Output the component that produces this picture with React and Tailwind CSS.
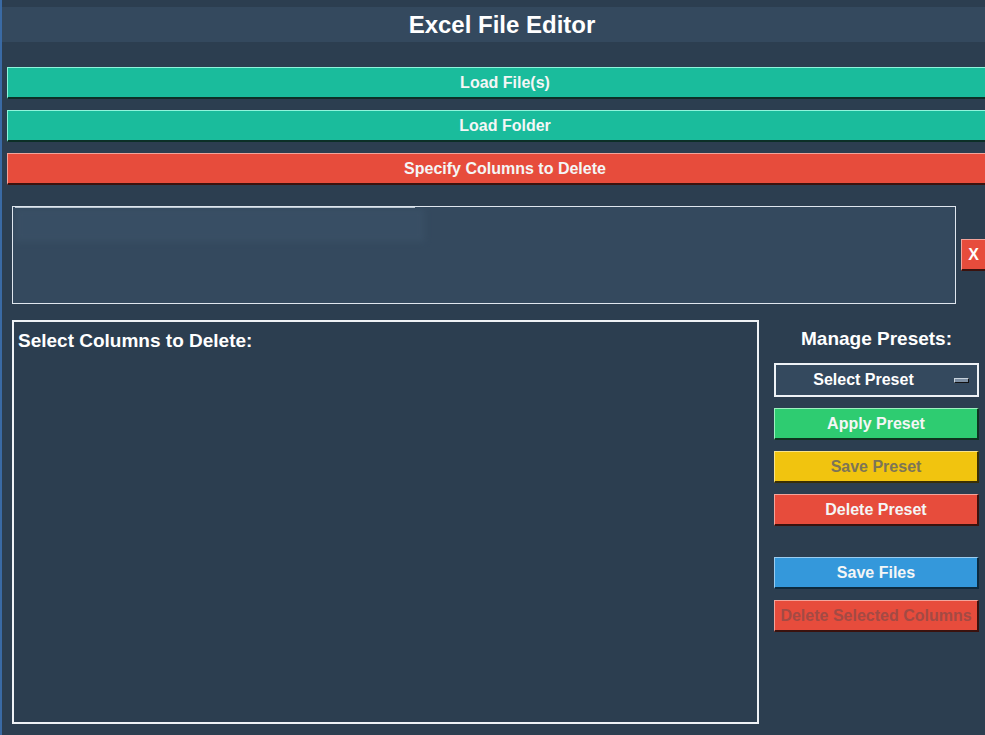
const FONT = { fontFamily: '"Liberation Sans", Arial, sans-serif' };

const WideButton = ({ label, color }) => (
  <button
    className={`w-full h-[32px] flex items-center justify-center text-[16px] font-bold text-[#f4f6f6] border-t border-l border-b-2 ${color}`}
  >
    {label}
  </button>
);

const SideButton = ({ label, color, text = "text-[#f4f6f6]" }) => (
  <button
    className={`w-full h-[32px] flex items-center justify-center text-[16px] font-bold border-t border-l border-b-2 border-r-2 ${color} ${text}`}
  >
    {label}
  </button>
);

export default function App() {
  return (
    <div
      style={FONT}
      className="w-full h-[735px] overflow-hidden bg-[#2c3e50] border-l-2 border-[#3a6aa4] flex flex-col"
    >
      {/* header + actions span a frame wider than the viewport */}
      <div className="w-[1000px] shrink-0">
        <div className="mt-[7px] h-[35px] bg-[#34495e] flex items-center justify-center">
          <h1 className="text-[24px] font-bold text-white">Excel File Editor</h1>
        </div>

        <div className="mt-[25px] pl-[5px] flex flex-col gap-[11px]">
          <WideButton label="Load File(s)" color="bg-[#1abc9c] border-t-[#8ff5dc] border-l-[#8ff5dc] border-b-[#0c2f27]" />
          <WideButton label="Load Folder" color="bg-[#1abc9c] border-t-[#8ff5dc] border-l-[#8ff5dc] border-b-[#0c2f27]" />
          <WideButton label="Specify Columns to Delete" color="bg-[#e74c3c] border-t-[#f3a49b] border-l-[#f3a49b] border-b-[#3a120e]" />
        </div>
      </div>

      {/* file list */}
      <div className="mt-[21px] pl-[10px] flex items-center gap-[5px]">
        <div className="flex-1 h-[98px] bg-[#34495e] border border-[#dfe6ee] relative overflow-hidden">
          <div className="absolute left-[2px] top-[1px] w-[410px] h-[34px] bg-[#3a5066] blur-[3px] opacity-80" />
          <div className="absolute left-[2px] top-0 w-[400px] h-[1px] bg-[#b8c4cf]" />
        </div>
        <button className="w-[24px] h-[32px] bg-[#e74c3c] text-white text-[16px] font-bold border-t border-l border-b-2 border-t-[#f3a49b] border-l-[#f3a49b] border-b-[#3a120e]">
          X
        </button>
      </div>

      {/* lower area */}
      <div className="mt-[16px] pl-[10px] pr-[6px] flex gap-[15px]">
        <div className="w-[747px] h-[404px] border-2 border-[#eef2f6] bg-[#2c3e50] px-[4px] pt-[8px]">
          <p className="text-[19px] leading-[22px] font-bold text-white">Select Columns to Delete:</p>
        </div>

        <div className="flex-1 flex flex-col">
          <p className="mt-[8px] text-center text-[19px] leading-[22px] font-bold text-white">Manage Presets:</p>
          <button className="mt-[13px] h-[34px] w-full bg-[#34495e] border-2 border-[#eef2f6] flex items-center text-[16px] font-bold text-white relative">
            <span className="flex-1 text-center pr-[26px]">Select Preset</span>
            <span className="absolute right-[8px] top-[13px] w-[15px] h-[5px] bg-[#7d8fa3] border border-t-[#c7d2dc] border-l-[#c7d2dc] border-b-[#111] border-r-[#111]" />
          </button>
          <div className="mt-[11px] flex flex-col gap-[11px]">
            <SideButton label="Apply Preset" color="bg-[#2ecc71] border-t-[#9ef0c0] border-l-[#9ef0c0] border-b-[#0f3320] border-r-[#0f3320]" />
            <SideButton label="Save Preset" color="bg-[#f1c40f] border-t-[#f9e38a] border-l-[#f9e38a] border-b-[#3a2f05] border-r-[#3a2f05]" text="text-[#7d7556]" />
            <SideButton label="Delete Preset" color="bg-[#e74c3c] border-t-[#f3a49b] border-l-[#f3a49b] border-b-[#3a120e] border-r-[#3a120e]" />
          </div>
          <div className="mt-[31px] flex flex-col gap-[11px]">
            <SideButton label="Save Files" color="bg-[#3498db] border-t-[#9cccef] border-l-[#9cccef] border-b-[#0d2a3d] border-r-[#0d2a3d]" />
            <SideButton label="Delete Selected Columns" color="bg-[#e74c3c] border-t-[#f3a49b] border-l-[#f3a49b] border-b-[#3a120e] border-r-[#3a120e]" text="text-[#a34a44]" />
          </div>
        </div>
      </div>
    </div>
  );
}
